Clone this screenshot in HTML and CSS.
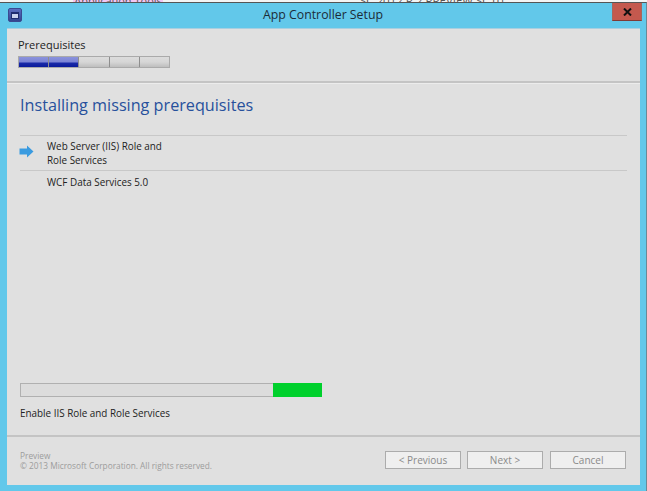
FILE: index.html
```html
<!DOCTYPE html>
<html lang="en">
<head>
  <meta charset="UTF-8" />
  <title>App Controller Setup</title>
  <link rel="stylesheet" href="styles.css">
</head>
<body>
  <div class="behind">
    <span class="behind-tab">Application Tools</span>
    <span class="behind-title">SC 2012 R 2 PREVIEW SC 01</span>
  </div>
  <div class="window">
    <div class="titlebar">
      <div class="app-icon"><span class="app-icon-inner"></span></div>
      <div class="title">App Controller Setup</div>
      <button class="close">
        <svg width="9" height="8" viewBox="0 0 9 8"><path d="M1 0.5 L8 7.5 M8 0.5 L1 7.5" stroke="#111" stroke-width="2" fill="none"/></svg>
      </button>
    </div>
    <div class="client">
      <div class="steps-area">
        <div class="steps-label">Prerequisites</div>
        <div class="steps">
          <div class="step done"></div>
          <div class="step done"></div>
          <div class="step"></div>
          <div class="step"></div>
          <div class="step"></div>
        </div>
      </div>
      <div class="main">
        <h1>Installing missing prerequisites</h1>
        <div class="tasks">
          <div class="task task-current">
            <svg class="arrow" width="15" height="13" viewBox="0 0 15 13"><path d="M0.5 3.5 H8 V0.5 L14.5 6.5 L8 12.5 V9.5 H0.5 Z" fill="#3a9be0"/></svg>
            <div>Web Server (IIS) Role and<br>Role Services</div>
          </div>
          <div class="task">
            <div>WCF Data Services 5.0</div>
          </div>
        </div>
        <div class="spacer"></div>
        <div class="progress"><div class="progress-fill"></div></div>
        <div class="progress-label">Enable IIS Role and Role Services</div>
      </div>
      <div class="footer">
        <div class="legal">Preview<br>© 2013 Microsoft Corporation. All rights reserved.</div>
        <div class="buttons">
          <button class="btn">&lt; Previous</button>
          <button class="btn">Next &gt;</button>
          <button class="btn btn-cancel">Cancel</button>
        </div>
      </div>
    </div>
  </div>
</body>
</html>
```

FILE: styles.css
```css
html, body {
  margin: 0;
  padding: 0;
}
body {
  width: 647px;
  height: 491px;
  overflow: hidden;
  background: #62c8ea;
  font-family: "Open Sans", "Noto Sans", sans-serif;
  color: #222;
}
.behind {
  height: 2px;
  overflow: hidden;
  display: flex;
  background: #f4f4f4;
  font-size: 11px;
  line-height: 2px;
  color: #555;
  padding-left: 73px;
}
.behind-tab {
  width: 90px;
  background: #f3c6f3;
  text-align: center;
}
.behind-title {
  margin-left: 197px;
  font-size: 11.5px;
}
.window {
  height: 489px;
  box-sizing: border-box;
  border-top: 1px solid #555;
  border-right: 1px solid #6a8a96;
  display: flex;
  flex-direction: column;
}
.titlebar {
  height: 25px;
  display: flex;
  align-items: flex-start;
  position: relative;
}
.app-icon {
  width: 12px;
  height: 12px;
  margin: 5px 0 0 8px;
  background: linear-gradient(#5a6cc0, #33458f);
  border: 1px solid #3a4a90;
  border-radius: 2px;
  display: flex;
  align-items: center;
  justify-content: center;
}
.app-icon-inner {
  width: 6px;
  height: 4px;
  background: #c9d2ee;
  border: 1px solid #1f2c70;
  border-top-width: 2px;
}
.title {
  position: absolute;
  left: 0;
  right: 0;
  top: 4px;
  text-align: center;
  font-size: 12.3px;
  line-height: 16px;
  color: #1c2c38;
}
.close {
  margin-left: auto;
  margin-right: 4px;
  width: 30px;
  height: 18px;
  padding: 0;
  background: #c4594e;
  border: none;
  border-bottom: 1px solid #7f3a35;
  border-left: 1px solid #a6665e;
  border-right: 1px solid #a6665e;
  display: flex;
  align-items: center;
  justify-content: center;
}
.client {
  flex: 1;
  margin: 0 6px 6px 7px;
  background: #e0e0e0;
  border-top: 1px solid #a9cfe0;
  display: flex;
  flex-direction: column;
}
.steps-area {
  height: 54px;
  padding: 8px 0 0 11px;
  box-sizing: border-box;
  border-bottom: 2px solid #c4c4c4;
}
.steps-label {
  font-size: 11px;
  line-height: 16px;
  color: #222;
}
.steps {
  display: flex;
  width: 150px;
  height: 10px;
  margin-top: 3px;
  background: #c8c8c8;
  border: 1px solid #aaa;
}
.step {
  flex: 1;
  border-right: 1px solid #8e8e8e;
  background: linear-gradient(#dcdcdc, #d6d6d6 50%, #bebebe);
}
.step:last-child {
  border-right: none;
}
.step.done {
  background: linear-gradient(#8a92dc, #7b84d6 50%, #1a2aa8 60%, #0a1a9c);
}
.main {
  flex: 1;
  display: flex;
  flex-direction: column;
  padding: 0 13px 0 13px;
  border-top: 1px solid #ececec;
}
h1 {
  margin: 10px 0 0;
  font-size: 16.2px;
  line-height: 22px;
  font-weight: 400;
  color: #27509c;
}
.tasks {
  margin-top: 19px;
  border-top: 1px solid #c8c8c8;
}
.task {
  display: flex;
  padding: 3px 0 3px 27px;
  font-size: 9.9px;
  line-height: 14px;
  color: #222;
  position: relative;
}
.task + .task {
  padding-top: 4px;
}
.task-current {
  border-bottom: 1px solid #c8c8c8;
}
.arrow {
  position: absolute;
  left: -1px;
  top: 9px;
}
.spacer {
  flex: 1;
}
.progress {
  width: 300px;
  height: 12px;
  background: #dcdcdc;
  border: 1px solid #b0b0b0;
  display: flex;
  justify-content: flex-end;
}
.progress-fill {
  width: 49px;
  margin: -1px -1px -1px 0;
  background: #00d02c;
}
.progress-label {
  margin-top: 9px;
  margin-bottom: 15px;
  font-size: 9.9px;
  line-height: 14px;
  color: #222;
}
.footer {
  height: 50px;
  box-sizing: border-box;
  border-top: 2px solid #c4c4c4;
  display: flex;
  justify-content: space-between;
  padding: 14px 14px 0 13px;
}
.legal {
  font-size: 8.3px;
  line-height: 10px;
  color: #9c9c9c;
}
.buttons {
  display: flex;
  gap: 6px;
}
.btn {
  width: 76px;
  height: 18px;
  padding: 0;
  background: #efefef;
  border: 1px solid #acacac;
  font-family: "Open Sans", "Noto Sans", sans-serif;
  font-size: 10px;
  color: #8a8a8a;
}
.btn-cancel {
  margin-left: 1px;
}
```
